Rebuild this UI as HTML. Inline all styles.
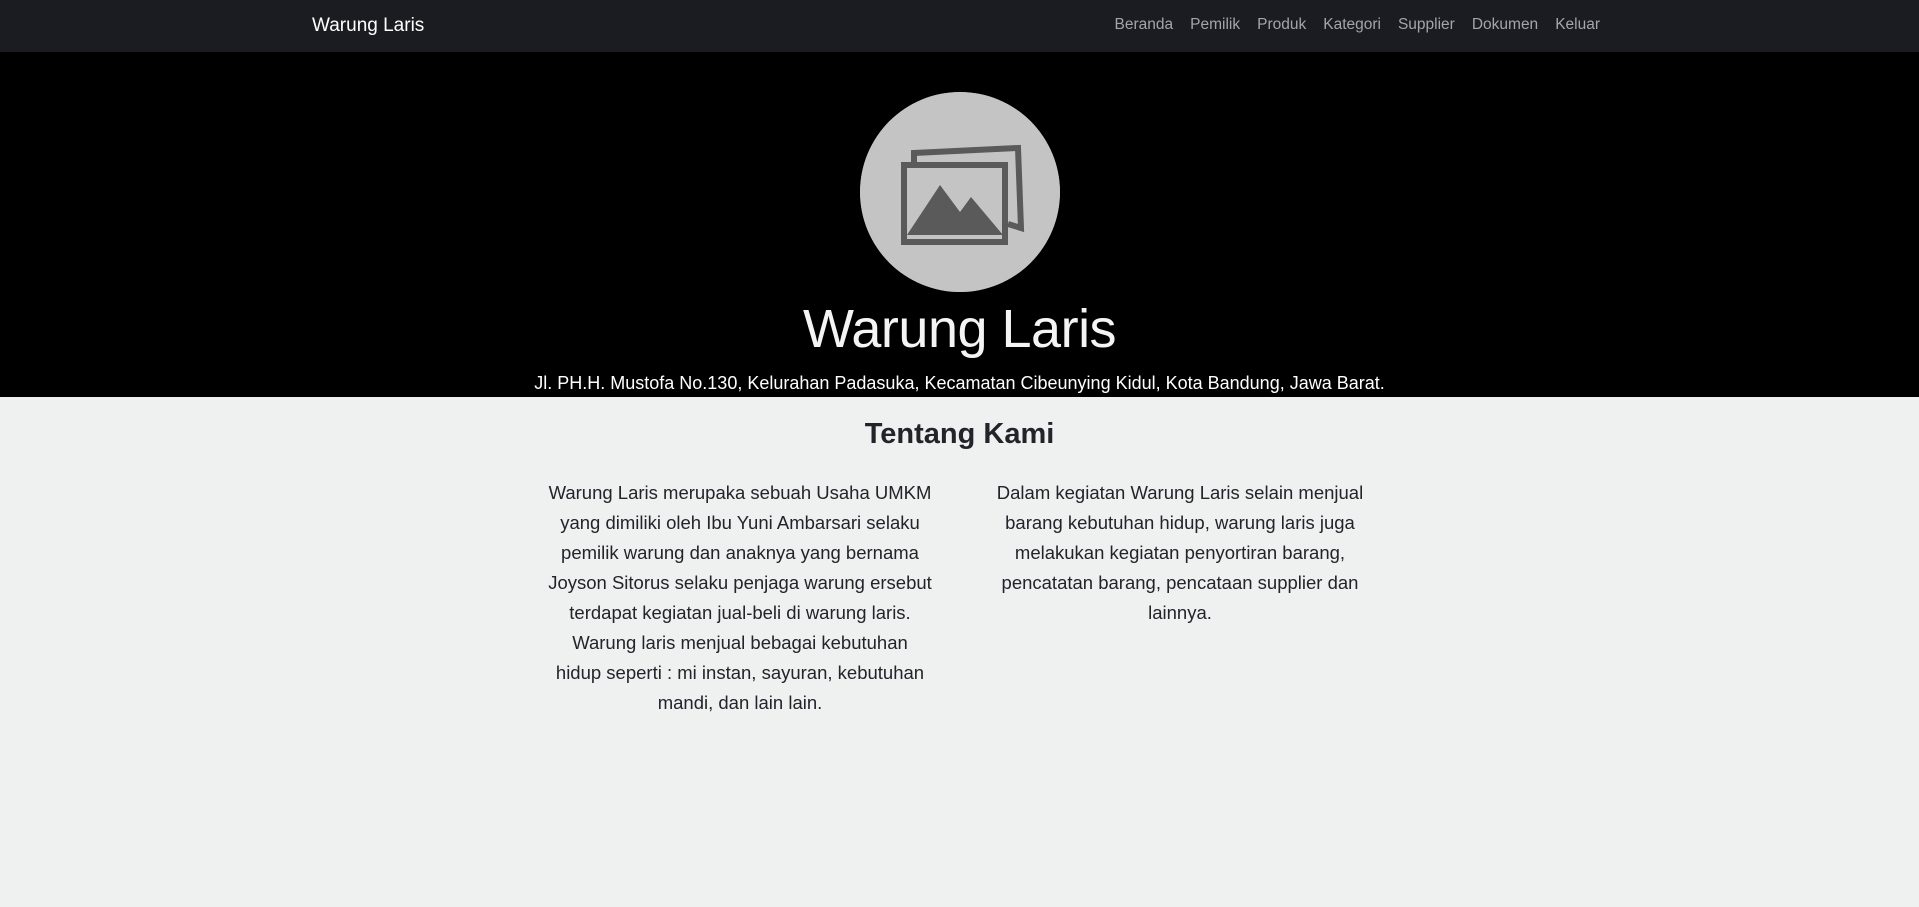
<!DOCTYPE html>
<html><head><meta charset="utf-8"><style>
*{box-sizing:border-box;margin:0;padding:0}
body{width:1919px;height:907px;overflow:hidden;background:#eff0f0;font-family:"Liberation Sans",sans-serif;color:#212529}
.nav{height:52px;background:#1b1c22;position:relative}
.brand{position:absolute;left:312px;top:15px;color:#fff;font-size:19px}
.links{position:absolute;right:319px;top:16px;display:flex;gap:17px;font-size:15.5px;color:#a4a5a8}
.hero{background:#000;height:345px;text-align:center;padding-top:40px}
.circle{width:200px;height:200px;border-radius:50%;background:#c4c4c4;margin:0 auto;display:block}
.hero h1{font-weight:300;font-size:54px;color:#f4f4f4;line-height:66px;margin-top:4px;letter-spacing:-0.5px}
.hero p{color:#fff;font-size:18px;line-height:30px;margin-top:6px}
h2{text-align:center;font-size:29px;font-weight:600;margin-top:17px;line-height:40px}
.row{display:flex;margin-left:520px;width:880px;margin-top:24px}
.col{width:440px;padding:0 6px;text-align:center;font-size:18.5px;line-height:30px;white-space:nowrap}
</style></head><body>
<div class="nav"><div class="brand">Warung Laris</div>
<div class="links"><span>Beranda</span><span>Pemilik</span><span>Produk</span><span>Kategori</span><span>Supplier</span><span>Dokumen</span><span>Keluar</span></div></div>
<div class="hero">
<svg class="circle" viewBox="0 0 200 200" width="200" height="200"><circle cx="100" cy="100" r="100" fill="#c4c4c4"/>
<path d="M54 70 L54 61 L158 56 L161 136 L148 132" fill="none" stroke="#5a5a5a" stroke-width="6"/>
<rect x="44" y="73" width="101" height="77" fill="none" stroke="#5a5a5a" stroke-width="6"/>
<path d="M47 143 L80 93 L100 120 L111 105 L143 143 Z" fill="#5a5a5a"/>
</svg>
<h1>Warung Laris</h1>
<p>Jl. PH.H. Mustofa No.130, Kelurahan Padasuka, Kecamatan Cibeunying Kidul, Kota Bandung, Jawa Barat.</p>
</div>
<h2>Tentang Kami</h2>
<div class="row">
<div class="col">Warung Laris merupaka sebuah Usaha UMKM<br>yang dimiliki oleh Ibu Yuni Ambarsari selaku<br>pemilik warung dan anaknya yang bernama<br>Joyson Sitorus selaku penjaga warung ersebut<br>terdapat kegiatan jual-beli di warung laris.<br>Warung laris menjual bebagai kebutuhan<br>hidup seperti : mi instan, sayuran, kebutuhan<br>mandi, dan lain lain.</div>
<div class="col">Dalam kegiatan Warung Laris selain menjual<br>barang kebutuhan hidup, warung laris juga<br>melakukan kegiatan penyortiran barang,<br>pencatatan barang, pencataan supplier dan<br>lainnya.</div>
</div>
</body></html>
